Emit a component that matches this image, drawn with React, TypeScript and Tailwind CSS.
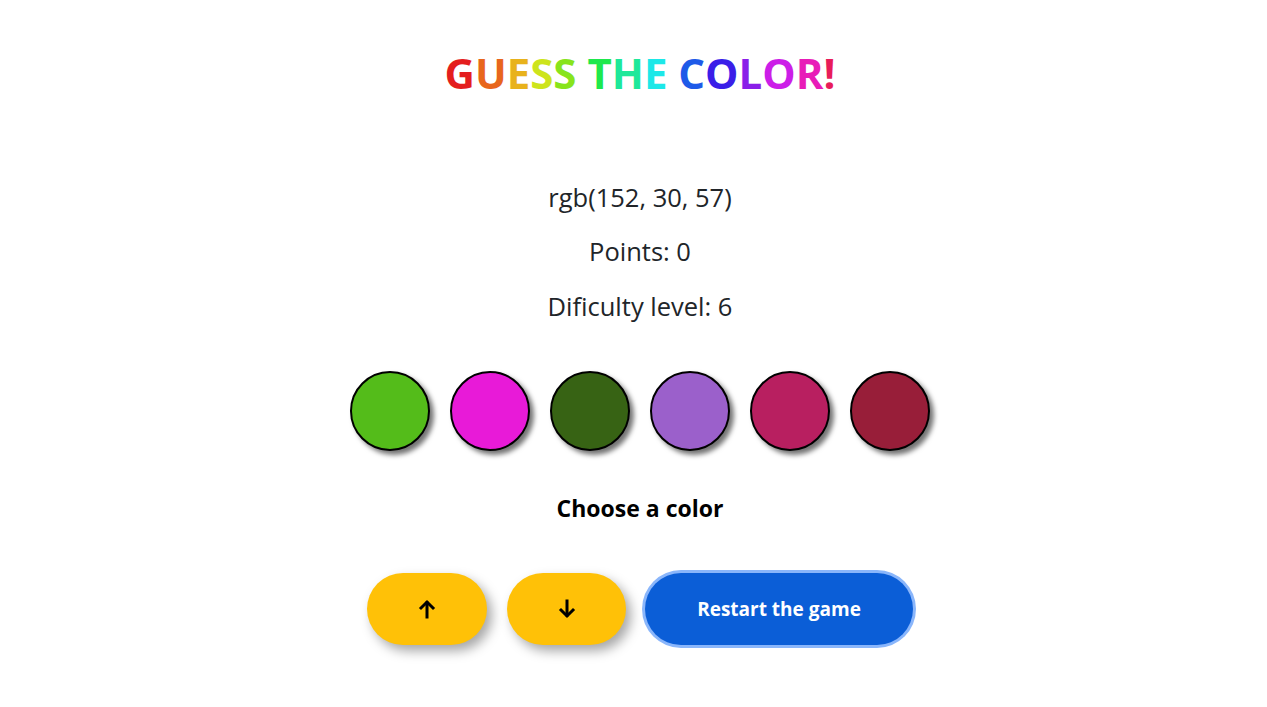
import { FC } from "react";

const TITLE: [string, string][] = [
    ["G", "#e41e1e"],
    ["U", "#e8661c"],
    ["E", "#e8b21c"],
    ["S", "#cde41c"],
    ["S", "#88e41c"],
    [" ", "#000"],
    ["T", "#1ee84c"],
    ["H", "#1ee89a"],
    ["E", "#1ce8e8"],
    [" ", "#000"],
    ["C", "#1e5ae8"],
    ["O", "#3a1ee8"],
    ["L", "#8a1ee8"],
    ["O", "#cc1ee8"],
    ["R", "#e81cb8"],
    ["!", "#e81c5a"],
];

const COLORS = ["#54bc1a", "#e81ad8", "#376314", "#9b60cb", "#b81f60", "#981e39"];

const ArrowUp: FC = () => (
    <svg width="18" height="20" viewBox="0 0 18 20" fill="none" stroke="black" strokeWidth="3" strokeLinecap="square">
        <path d="M9 18V4" />
        <path d="M3 9l6-6 6 6" />
    </svg>
);

const ArrowDown: FC = () => (
    <svg width="18" height="20" viewBox="0 0 18 20" fill="none" stroke="black" strokeWidth="3" strokeLinecap="square">
        <path d="M9 2v14" />
        <path d="M3 11l6 6 6-6" />
    </svg>
);

const App: FC = () => {
    return (
        <div
            className="min-h-screen bg-white pl-[13px] flex flex-col items-center text-[#212529]"
            style={{ fontFamily: '"Open Sans", "Noto Sans", sans-serif' }}>
            <h1 className="mt-[45px] h-[56px] leading-[56px] text-[42px] font-bold">
                {TITLE.map(([ch, c], i) => (
                    <span key={i} style={{ color: c }}>
                        {ch}
                    </span>
                ))}
            </h1>

            <div className="mt-[78px] h-9 leading-9 text-[25.5px]">rgb(152, 30, 57)</div>
            <div className="mt-[18px] h-9 leading-9 text-[25.5px]">Points: 0</div>
            <div className="mt-[19px] h-9 leading-9 text-[25.5px]">Dificulty level: 6</div>

            <div className="mt-[47px] flex gap-5">
                {COLORS.map((c) => (
                    <button
                        key={c}
                        className="w-20 h-20 rounded-full border-2 border-black shadow-[4px_4px_5px_rgba(0,0,0,0.55)]"
                        style={{ backgroundColor: c }}
                    />
                ))}
            </div>

            <div className="mt-[41px] h-8 leading-8 text-[23px] font-bold text-black">Choose a color</div>

            <div className="mt-[49px] flex items-center gap-5">
                <button className="w-[120px] h-[72px] rounded-full bg-[#ffc107] flex items-center justify-center shadow-[5px_6px_12px_rgba(0,0,0,0.35)]">
                    <ArrowUp />
                </button>
                <button className="w-[119px] h-[72px] rounded-full bg-[#ffc107] flex items-center justify-center shadow-[5px_6px_12px_rgba(0,0,0,0.35)]">
                    <ArrowDown />
                </button>
                <button className="ml-[-1px] w-[268px] h-[72px] rounded-full bg-[#0b5ed7] text-white text-[19px] font-bold ring-[3px] ring-[#8ab6fb]">
                    Restart the game
                </button>
            </div>
        </div>
    );
};

export default App;
